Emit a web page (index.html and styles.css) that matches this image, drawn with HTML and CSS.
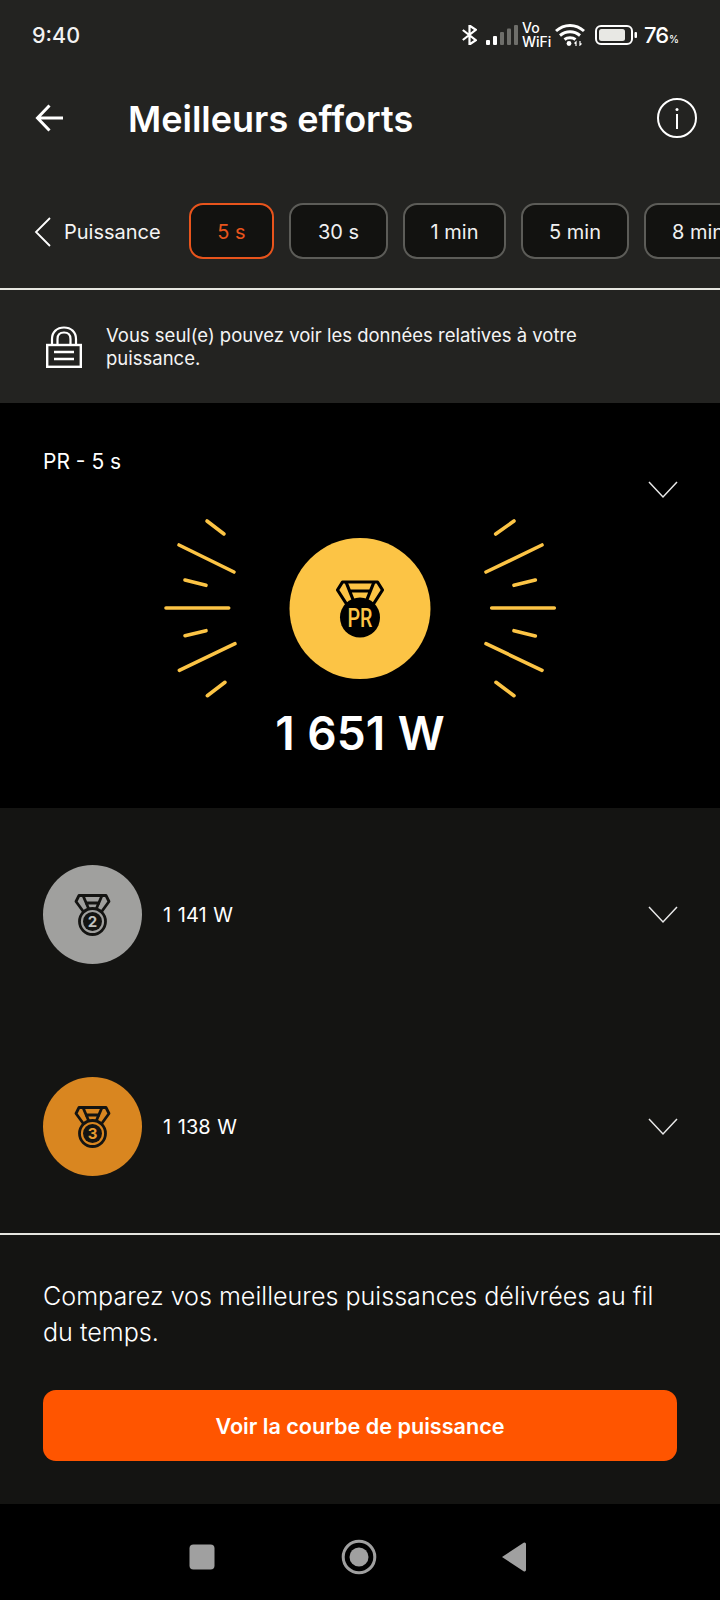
FILE: index.html
```html
<!DOCTYPE html>
<html lang="fr">
<head>
    <meta charset="UTF-8">
    <meta name="viewport" content="width=device-width, initial-scale=1.0">
    <title>Meilleurs efforts</title>
    <link rel="stylesheet" href="styles.css">
</head>
<body>
    <div class="screen">
        <!-- barre d'etat -->
        <div class="status-bar">
            <span class="status-time">9:40</span>
            <div class="status-icons">
                <svg class="ic-bt" width="15" height="20" viewBox="0 0 15 20"><path d="M.8 5l13 10.200L7.500 19.500V.5l6.300 4.300L.8 15" fill="none" stroke="#fff" stroke-width="2.200"/></svg>
                <svg class="ic-signal" width="32" height="20" viewBox="0 0 32 20">
                    <rect x="0" y="15" width="4" height="5" rx="1" fill="#fff"/>
                    <rect x="7" y="11" width="4" height="9" rx="1" fill="#fff"/>
                    <rect x="14" y="7" width="4" height="13" rx="1" fill="#6e6e6a"/>
                    <rect x="21" y="3.500" width="4" height="16.500" rx="1" fill="#6e6e6a"/>
                    <rect x="28" y="0" width="4" height="20" rx="1" fill="#6e6e6a"/>
                </svg>
                <div class="ic-vowifi"><span>Vo</span><span>WiFi</span></div>
                <svg class="ic-wifi" width="30" height="23" viewBox="0 0 30 23">
                    <path d="M1 8C9 .5 21 .5 29 8M5 12.500C11 7.500 19 7.500 25 12.500M9.500 16.500c3-2.400 8-2.400 11 0" fill="none" stroke="#fff" stroke-width="3"/>
                    <circle cx="14" cy="20.500" r="2.400" fill="#fff"/>
                    <path d="M21 23v-4l-1.500 1.500M25 18v4l1.500-1.500" fill="none" stroke="#fff" stroke-width="1.200"/>
                </svg>
                <svg class="ic-battery" width="42" height="20" viewBox="0 0 42 20">
                    <rect x="1" y="1" width="36" height="18" rx="5" fill="none" stroke="#fff" stroke-width="2"/>
                    <rect x="4" y="4" width="26" height="12" rx="2.500" fill="#e8e8e4"/>
                    <rect x="39.500" y="7" width="2.500" height="6" rx="1" fill="#fff"/>
                </svg>
                <span class="status-level">76<small>%</small></span>
            </div>
        </div>

        <header class="app-bar">
            <svg class="back-arrow" width="30" height="30" viewBox="0 0 30 30"><path d="M28 15H3M14.500 2.500L2.500 15l12 12.500" fill="none" stroke="#fff" stroke-width="3"/></svg>
            <h1 class="app-title">Meilleurs efforts</h1>
            <svg class="info-icon" width="40" height="40" viewBox="0 0 40 40">
                <circle cx="20" cy="20" r="19" fill="none" stroke="#fff" stroke-width="2"/>
                <circle cx="20" cy="11.500" r="1.500" fill="#fff"/>
                <rect x="19" y="16" width="2" height="15" fill="#fff"/>
            </svg>
        </header>

        <!-- filtres de duree -->
        <nav class="tabs">
            <div class="tabs-back">
                <svg width="17" height="30" viewBox="0 0 17 30"><path d="M16 1L2 15l14 14" fill="none" stroke="#fff" stroke-width="1.800"/></svg>
                <span>Puissance</span>
            </div>
            <button class="chip chip-active">5 s</button>
            <button class="chip chip-30">30 s</button>
            <button class="chip chip-1">1 min</button>
            <button class="chip chip-5">5 min</button>
            <button class="chip chip-8">8 min</button>
        </nav>

        <div class="notice">
            <svg class="lock-icon" width="36" height="42" viewBox="0 0 36 42">
                <path d="M6 20V13C6 6 11 1.500 18 1.500S30 6 30 13v7M11.500 20v-7c0-4 2.500-6.500 6.500-6.500s6.500 2.500 6.500 6.500v7" fill="none" stroke="#fff" stroke-width="2.200"/>
                <rect x="1.200" y="19" width="33.600" height="21.800" fill="#232321" stroke="#fff" stroke-width="2.400"/>
                <path d="M8 26h20M8 33h20" stroke="#fff" stroke-width="2.400"/>
            </svg>
            <p>Vous seul(e) pouvez voir les données relatives à votre puissance.</p>
        </div>

        <!-- record personnel -->
        <section class="best">
            <div class="best-head">
                <span class="best-label">PR - 5 s</span>
                <svg class="chevron chevron-best" width="30" height="18" viewBox="0 0 30 18"><path d="M1 1l14 15L29 1" fill="none" stroke="#e8e8e8" stroke-width="1.500"/></svg>
            </div>
            <svg class="burst" width="400" height="190" viewBox="160 510 400 190">
                <g stroke="#fcc445" stroke-width="3.600" stroke-linecap="round" fill="none">
                    <path d="M207 521l17 13M179 545l55 27M185 580l21 5.300M166 608h62.700M185 635.700l21-5M179.300 670.300l55.700-26.600M207.300 695.700l17.700-13.400"/>
                    <path d="M514 521l-18.300 13M542 545l-56 27M535.300 580l-21.300 5.300M491.700 608h62.600M514 630.700l21.300 5.300M486 643.700l56 26.600M496 682.300l18 13.400"/>
                </g>
                <circle cx="360" cy="608.500" r="70.500" fill="#fcc445"/>
                <path d="M342.500 582h35l5 8-9 14h-27l-9-14z" fill="none" stroke="#000" stroke-width="3.200" stroke-linejoin="round"/>
                <path d="M346 582l8 20M374 582l-8 20M350 591h20" fill="none" stroke="#000" stroke-width="3.200"/>
                <circle cx="360" cy="617.500" r="20" fill="#000"/>
                <text class="medal-pr" x="360" y="627" text-anchor="middle" textLength="25" lengthAdjust="spacingAndGlyphs">PR</text>
            </svg>
            <div class="best-value">1 651 W</div>
        </section>

        <section class="efforts">
            <div class="effort-row">
                <svg class="medal" width="99" height="99" viewBox="0 0 99 99">
                    <circle cx="49.500" cy="49.500" r="49.500" fill="#a0a09e"/>
                    <path d="M36 30.500h27l3 6-8 11H41l-8-11z" fill="none" stroke="#141412" stroke-width="2.800" stroke-linejoin="round"/>
                    <path d="M40 30.500l6 14M59 30.500l-6 14M42 38h15" fill="none" stroke="#141412" stroke-width="2.800"/>
                    <circle cx="49.500" cy="56.500" r="13" fill="#a0a09e" stroke="#141412" stroke-width="2.800"/>
                    <circle cx="49.500" cy="56.500" r="9.500" fill="#141412"/>
                    <text class="medal-num" x="49.500" y="62" fill="#c0c0be" text-anchor="middle">2</text>
                </svg>
                <span class="effort-value">1 141 W</span>
                <svg class="chevron" width="30" height="18" viewBox="0 0 30 18"><path d="M1 1l14 15L29 1" fill="none" stroke="#e8e8e8" stroke-width="1.500"/></svg>
            </div>
            <div class="effort-row">
                <svg class="medal" width="99" height="99" viewBox="0 0 99 99">
                    <circle cx="49.500" cy="49.500" r="49.500" fill="#d98620"/>
                    <path d="M36 30.500h27l3 6-8 11H41l-8-11z" fill="none" stroke="#141412" stroke-width="2.800" stroke-linejoin="round"/>
                    <path d="M40 30.500l6 14M59 30.500l-6 14M42 38h15" fill="none" stroke="#141412" stroke-width="2.800"/>
                    <circle cx="49.500" cy="56.500" r="13" fill="#d98620" stroke="#141412" stroke-width="2.800"/>
                    <circle cx="49.500" cy="56.500" r="9.500" fill="#141412"/>
                    <text class="medal-num" x="49.500" y="62" fill="#e89a30" text-anchor="middle">3</text>
                </svg>
                <span class="effort-value">1 138 W</span>
                <svg class="chevron" width="30" height="18" viewBox="0 0 30 18"><path d="M1 1l14 15L29 1" fill="none" stroke="#e8e8e8" stroke-width="1.500"/></svg>
            </div>
        </section>

        <section class="compare">
            <p>Comparez vos meilleures puissances délivrées au fil du temps.</p>
            <button class="cta">Voir la courbe de puissance</button>
        </section>

        <!-- navigation android -->
        <div class="nav-bar">
            <svg class="nav-square" width="26" height="26" viewBox="0 0 26 26"><rect x="0.500" y="0.500" width="25" height="25" rx="4" fill="#a0a0a0"/></svg>
            <svg class="nav-home" width="36" height="36" viewBox="0 0 36 36"><circle cx="18" cy="18" r="15.800" fill="none" stroke="#a0a0a0" stroke-width="3"/><circle cx="18" cy="18" r="9.500" fill="#a0a0a0"/></svg>
            <svg class="nav-back" width="24" height="30" viewBox="0 0 24 30"><path d="M24 2v26a1.500 1.500 0 0 1-2.400 1.200L0 15 21.600.8A1.500 1.500 0 0 1 24 2z" fill="#a0a0a0"/></svg>
        </div>
    </div>
</body>
</html>
```

FILE: styles.css
```css
* {
    margin: 0;
    padding: 0;
    box-sizing: border-box;
}

body {
    background: #000;
    font-family: Inter, "Noto Sans", sans-serif;
    color: #fff;
}

.screen {
    width: 720px;
    height: 1600px;
    display: flex;
    flex-direction: column;
    overflow: hidden;
    background: #232321;
}

/* barre d'etat */
.status-bar {
    height: 68px;
    flex: none;
    display: flex;
    align-items: center;
    justify-content: space-between;
    padding: 1px 40px 0 32px;
}

.status-time {
    font-size: 21.500px;
    font-weight: 500;
    color: #f2f2f2;
}

.status-icons {
    display: flex;
    align-items: center;
}

.ic-bt { margin-right: 9px; }
.ic-signal { margin-right: 4px; }
.ic-wifi { margin-right: 10px; }
.ic-battery { margin-right: 7px; }

.ic-vowifi {
    width: 28px;
    margin-right: 5px;
    display: flex;
    flex-direction: column;
    font-size: 14px;
    line-height: 14px;
    font-weight: 500;
}

.status-level {
    width: 36px;
    font-size: 22px;
    font-weight: 500;
    letter-spacing: -1px;
    white-space: nowrap;
}

.status-level small {
    font-size: 10px;
    letter-spacing: 0;
    margin-left: 1px;
}

/* entete */
.app-bar {
    height: 100px;
    flex: none;
    display: flex;
    align-items: center;
    padding: 0 23px 0 35px;
}

.app-title {
    flex: 1;
    margin: 2px 0 0 63px;
    font-size: 36px;
    font-weight: 600;
}

/* filtres */
.tabs {
    height: 122px;
    flex: none;
    display: flex;
    align-items: flex-start;
    gap: 15px;
    padding: 35px 0 0 34px;
    border-bottom: 2px solid #e6e6e0;
    overflow: hidden;
}

.tabs-back {
    width: 140px;
    height: 56px;
    flex: none;
    display: flex;
    align-items: center;
    gap: 13px;
    padding-top: 1px;
    font-size: 20px;
    color: #f4f4f4;
}

.chip {
    height: 56px;
    flex: none;
    padding-top: 1px;
    background: #121210;
    border: 2px solid #5c5c58;
    border-radius: 14px;
    color: #f0f0f0;
    font-family: inherit;
    font-size: 20px;
}

.chip-active {
    width: 85px;
    border-color: #e8541c;
    color: #e8541c;
}

.chip-30 { width: 99px; }
.chip-1 { width: 103px; }
.chip-5 { width: 108px; }
.chip-8 { width: 108px; }

.notice {
    height: 113px;
    flex: none;
    display: flex;
    align-items: center;
    gap: 24px;
    padding: 0 120px 0 46px;
}

.lock-icon {
    flex: none;
}

.notice p {
    margin-top: 1px;
    font-size: 18.500px;
    line-height: 23px;
    color: #f4f4f4;
}

/* record personnel */
.best {
    height: 405px;
    flex: none;
    background: #000;
    display: flex;
    flex-direction: column;
    align-items: center;
}

.best-head {
    width: 100%;
    height: 107px;
    flex: none;
    display: flex;
    justify-content: space-between;
    align-items: flex-start;
    padding: 45px 42px 0 43px;
}

.best-label {
    font-size: 21px;
    line-height: 28px;
}

.chevron-best {
    margin-top: 33px;
}

.burst {
    flex: none;
}

.medal-pr {
    font-family: Roboto, sans-serif;
    font-size: 26px;
    font-weight: 500;
    fill: #fcc445;
}

.medal-num {
    font-family: Inter, sans-serif;
    font-size: 15px;
    font-weight: 700;
}

.best-value {
    margin-top: 5px;
    font-size: 46px;
    line-height: 56px;
    font-weight: 600;
    word-spacing: 1px;
}

/* autres efforts */
.efforts {
    height: 425px;
    flex: none;
    background: #141412;
}

.effort-row {
    height: 212px;
    display: flex;
    align-items: center;
    padding: 0 42px 0 43px;
}

.medal {
    flex: none;
}

.effort-value {
    flex: 1;
    margin: 2px 0 0 21px;
    font-size: 20px;
    word-spacing: 1px;
}

.effort-row .chevron {
    margin-top: 2px;
}

.compare {
    height: 271px;
    flex: none;
    background: #141412;
    border-top: 2px solid #e6e6e0;
    padding: 43px 43px 0;
}

.compare p {
    font-size: 25.100px;
    line-height: 36px;
    font-weight: 300;
}

.cta {
    display: block;
    width: 634px;
    height: 71px;
    margin-top: 40px;
    padding-top: 1px;
    background: #ff5500;
    border: none;
    border-radius: 13px;
    color: #fff;
    font-family: inherit;
    font-size: 21.600px;
    font-weight: 600;
}

/* navigation android */
.nav-bar {
    flex: 1;
    background: #000;
    display: flex;
    align-items: center;
    padding: 10px 0 0 189px;
}

.nav-square { margin-right: 126px; }
.nav-home { margin-right: 125px; }
```
